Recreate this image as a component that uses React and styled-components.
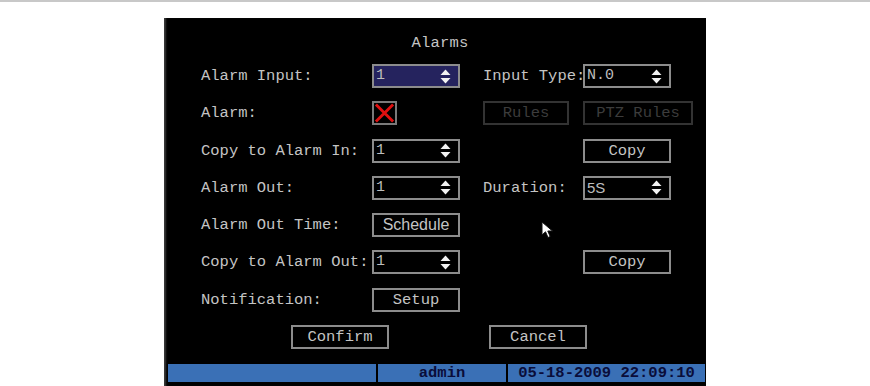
import styled, { createGlobalStyle } from "styled-components";

const GlobalStyle = createGlobalStyle`
    html, body {
        margin: 0;
        padding: 0;
        background: #ffffff;
    }
    body {
        font-family: "Liberation Mono", "DejaVu Sans Mono", monospace;
    }
`;

function Arrows() {
    return (
        <ArrowSvg width="11" height="15" viewBox="0 0 11 15">
            <path d="M5.5 0.5 L10.5 6 L0.5 6 Z" fill="#f2f2f2" />
            <path d="M0.5 9 L10.5 9 L5.5 14.5 Z" fill="#f2f2f2" />
        </ArrowSvg>
    );
}

function Select({ value, active, sans }) {
    return (
        <SelectBox active={active}>
            <SelectValue sans={sans}>{value}</SelectValue>
            <Arrows />
        </SelectBox>
    );
}

function Cursor() {
    return (
        <CursorSvg width="14" height="18" viewBox="0 0 14 18">
            <path
                d="M1 1 L1 14 L4.5 10.8 L7 16.5 L9.2 15.5 L6.8 10 L11.5 10 Z"
                fill="#ffffff"
                stroke="#111"
                strokeWidth="1"
            />
        </CursorSvg>
    );
}

export default function App() {
    return (
        <>
            <GlobalStyle />
            <TopRule />
            <Page>
                <Screen>
                    <Title>Alarms</Title>
                    <Form>
                        <Label>Alarm Input:</Label>
                        <Select value="1" active />
                        <Label>Input Type:</Label>
                        <Select value="N.0" />

                        <Label>Alarm:</Label>
                        <Check>
                            <svg width="22" height="20" viewBox="0 0 22 20">
                                <path d="M2 1 L20 19 M20 1 L2 19" stroke="#e01010" strokeWidth="3" />
                            </svg>
                        </Check>
                        <Button disabled wide={86}>Rules</Button>
                        <Button disabled wide={110}>PTZ Rules</Button>

                        <Label>Copy to Alarm In:</Label>
                        <Select value="1" />
                        <span />
                        <Button>Copy</Button>

                        <Label>Alarm Out:</Label>
                        <Select value="1" />
                        <Label>Duration:</Label>
                        <Select value="5S" sans />

                        <Label>Alarm Out Time:</Label>
                        <Button sans>Schedule</Button>
                        <span />
                        <span />

                        <Label>Copy to Alarm Out:</Label>
                        <Select value="1" />
                        <span />
                        <Button>Copy</Button>

                        <Label>Notification:</Label>
                        <Button>Setup</Button>
                        <span />
                        <span />
                    </Form>
                    <Actions>
                        <Button wide={98}>Confirm</Button>
                        <Button wide={98}>Cancel</Button>
                    </Actions>
                    <StatusBar>
                        <StatusCell />
                        <StatusCell>admin</StatusCell>
                        <StatusCell>05-18-2009 22:09:10</StatusCell>
                    </StatusBar>
                    <Cursor />
                </Screen>
            </Page>
        </>
    );
}

const TopRule = styled.div`
    height: 2px;
    background: #c8c8c8;
`;

const Page = styled.div`
    display: flex;
    padding: 16px 0 0 164px;
    height: 368px;
`;

const Screen = styled.div`
    position: relative;
    width: 542px;
    height: 368px;
    background: #000;
    box-shadow: inset 3px 0 2px -1px #3a3a3a;
    color: #c4c4c4;
    display: flex;
    flex-direction: column;
    overflow: hidden;
`;

const Title = styled.div`
    text-align: center;
    font-size: 15.5px;
    line-height: 18px;
    padding-top: 16px;
    padding-left: 10px;
    height: 30px;
    box-sizing: border-box;
    letter-spacing: 0.2px;
`;

const Form = styled.div`
    display: grid;
    grid-template-columns: 171px 111px 100px auto;
    grid-auto-rows: 24px;
    row-gap: 13.3px;
    padding: 16px 0 0 37px;
    align-items: center;
`;

const Label = styled.span`
    font-size: 15.5px;
    line-height: 24px;
    white-space: nowrap;
    color: #c4c4c4;
`;

const SelectBox = styled.div`
    box-sizing: border-box;
    width: 88px;
    height: 24px;
    border: 2px solid #8c8c8c;
    background: ${(p) => (p.active ? "#25235e" : "#000")};
    display: flex;
    align-items: center;
    justify-content: space-between;
    padding: 0 7px 0 2px;
`;

const SelectValue = styled.span`
    font-family: ${(p) =>
        p.sans ? '"Liberation Sans", Arial, sans-serif' : '"Liberation Mono", monospace'};
    font-size: 15px;
    color: #bdbdbd;
    line-height: 20px;
`;

const ArrowSvg = styled.svg`
    display: block;
`;

const Check = styled.div`
    box-sizing: border-box;
    width: 25px;
    height: 24px;
    border: 2px solid #7a7a7a;
    display: flex;
    align-items: center;
    justify-content: center;
`;

const Button = styled.div`
    box-sizing: border-box;
    width: ${(p) => (p.wide ? p.wide : 88)}px;
    height: 24px;
    border: 2px solid ${(p) => (p.disabled ? "#333" : "#8c8c8c")};
    color: ${(p) => (p.disabled ? "#3c3c3c" : "#c4c4c4")};
    font-family: ${(p) =>
        p.sans ? '"Liberation Sans", Arial, sans-serif' : '"Liberation Mono", monospace'};
    font-size: ${(p) => (p.sans ? "16px" : "15.5px")};
    display: flex;
    align-items: center;
    justify-content: center;
    white-space: nowrap;
`;

const Actions = styled.div`
    display: flex;
    gap: 100px;
    padding: 13px 0 0 127px;
`;

const StatusBar = styled.div`
    margin-top: auto;
    margin-bottom: 4px;
    display: grid;
    grid-template-columns: 208px 128px 1fr;
    gap: 2px;
    padding: 0 1px 0 4px;
    height: 18px;
`;

const StatusCell = styled.div`
    background: #3a70b6;
    color: #0a0d3a;
    font-family: "Liberation Mono", monospace;
    font-weight: bold;
    font-size: 15.5px;
    line-height: 18px;
    text-align: center;
    white-space: nowrap;
    overflow: hidden;
`;

const CursorSvg = styled.svg`
    position: absolute;
    left: 377px;
    top: 203px;
`;
